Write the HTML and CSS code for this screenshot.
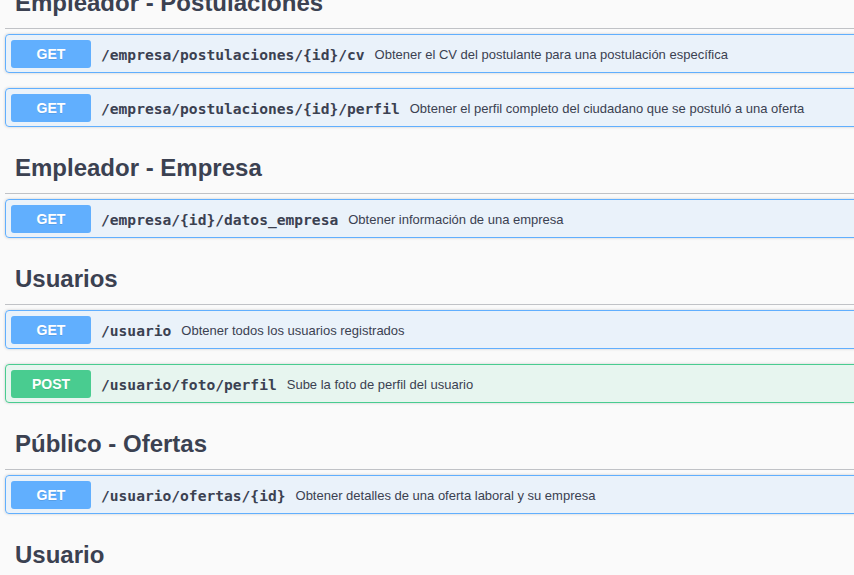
FILE: index.html
```html
<!DOCTYPE html>
<html lang="es">
<head>
<meta charset="utf-8">
<title>API</title>
<link rel="stylesheet" href="styles.css">
</head>
<body>
<div class="page">
  <section class="tag-section">
    <h3 class="tag">Empleador - Postulaciones</h3>
    <div class="opblock get">
      <div class="summary"><span class="method">GET</span><span class="path">/empresa/postulaciones/{id}/cv</span><span class="desc">Obtener el CV del postulante para una postulación específica</span></div>
    </div>
    <div class="opblock get">
      <div class="summary"><span class="method">GET</span><span class="path">/empresa/postulaciones/{id}/perfil</span><span class="desc">Obtener el perfil completo del ciudadano que se postuló a una oferta</span></div>
    </div>
  </section>
  <section class="tag-section">
    <h3 class="tag">Empleador - Empresa</h3>
    <div class="opblock get">
      <div class="summary"><span class="method">GET</span><span class="path">/empresa/{id}/datos_empresa</span><span class="desc">Obtener información de una empresa</span></div>
    </div>
  </section>
  <section class="tag-section">
    <h3 class="tag">Usuarios</h3>
    <div class="opblock get">
      <div class="summary"><span class="method">GET</span><span class="path">/usuario</span><span class="desc">Obtener todos los usuarios registrados</span></div>
    </div>
    <div class="opblock post">
      <div class="summary"><span class="method">POST</span><span class="path">/usuario/foto/perfil</span><span class="desc">Sube la foto de perfil del usuario</span></div>
    </div>
  </section>
  <section class="tag-section">
    <h3 class="tag">Público - Ofertas</h3>
    <div class="opblock get">
      <div class="summary"><span class="method">GET</span><span class="path">/usuario/ofertas/{id}</span><span class="desc">Obtener detalles de una oferta laboral y su empresa</span></div>
    </div>
  </section>
  <section class="tag-section">
    <h3 class="tag">Usuario</h3>
  </section>
</div>
</body>
</html>
```
FILE: styles.css
```css
html, body {
  margin: 0;
  padding: 0;
  background: #fafafa;
  overflow: hidden;
}

body {
  height: 575px;
}

.page {
  width: 900px;
  padding-left: 5px;
  margin-top: -23px;
  font-family: "Liberation Sans", Arial, sans-serif;
  color: #3b4151;
}

.tag {
  display: flex;
  align-items: center;
  height: 31px;
  margin: 0 0 5px;
  padding: 10px;
  font-size: 24px;
  font-weight: bold;
  line-height: 31px;
  color: #3b4151;
  border-bottom: 1px solid rgba(59, 65, 81, 0.3);
}

.opblock {
  margin: 0 0 15px;
  border: 1px solid #61affe;
  border-radius: 4px;
  background: rgba(97, 175, 254, 0.1);
  box-shadow: 0 0 3px rgba(0, 0, 0, 0.19);
}

.opblock.post {
  border-color: #49cc90;
  background: rgba(73, 204, 144, 0.1);
}

.summary {
  display: flex;
  align-items: center;
  height: 28px;
  padding: 5px 5px 4px;
}

.method {
  box-sizing: border-box;
  min-width: 80px;
  padding: 6px 0;
  text-align: center;
  font-size: 14px;
  font-weight: bold;
  line-height: 16px;
  color: #fff;
  background: #61affe;
  border-radius: 3px;
  text-shadow: 0 1px 0 rgba(0, 0, 0, 0.1);
}

.post .method {
  background: #49cc90;
}

.path {
  padding: 0 10px;
  font-family: "DejaVu Sans Mono", monospace;
  font-size: 14.6px;
  font-weight: bold;
  color: #3b4151;
}

.desc {
  font-size: 13px;
  color: #3b4151;
}
```
